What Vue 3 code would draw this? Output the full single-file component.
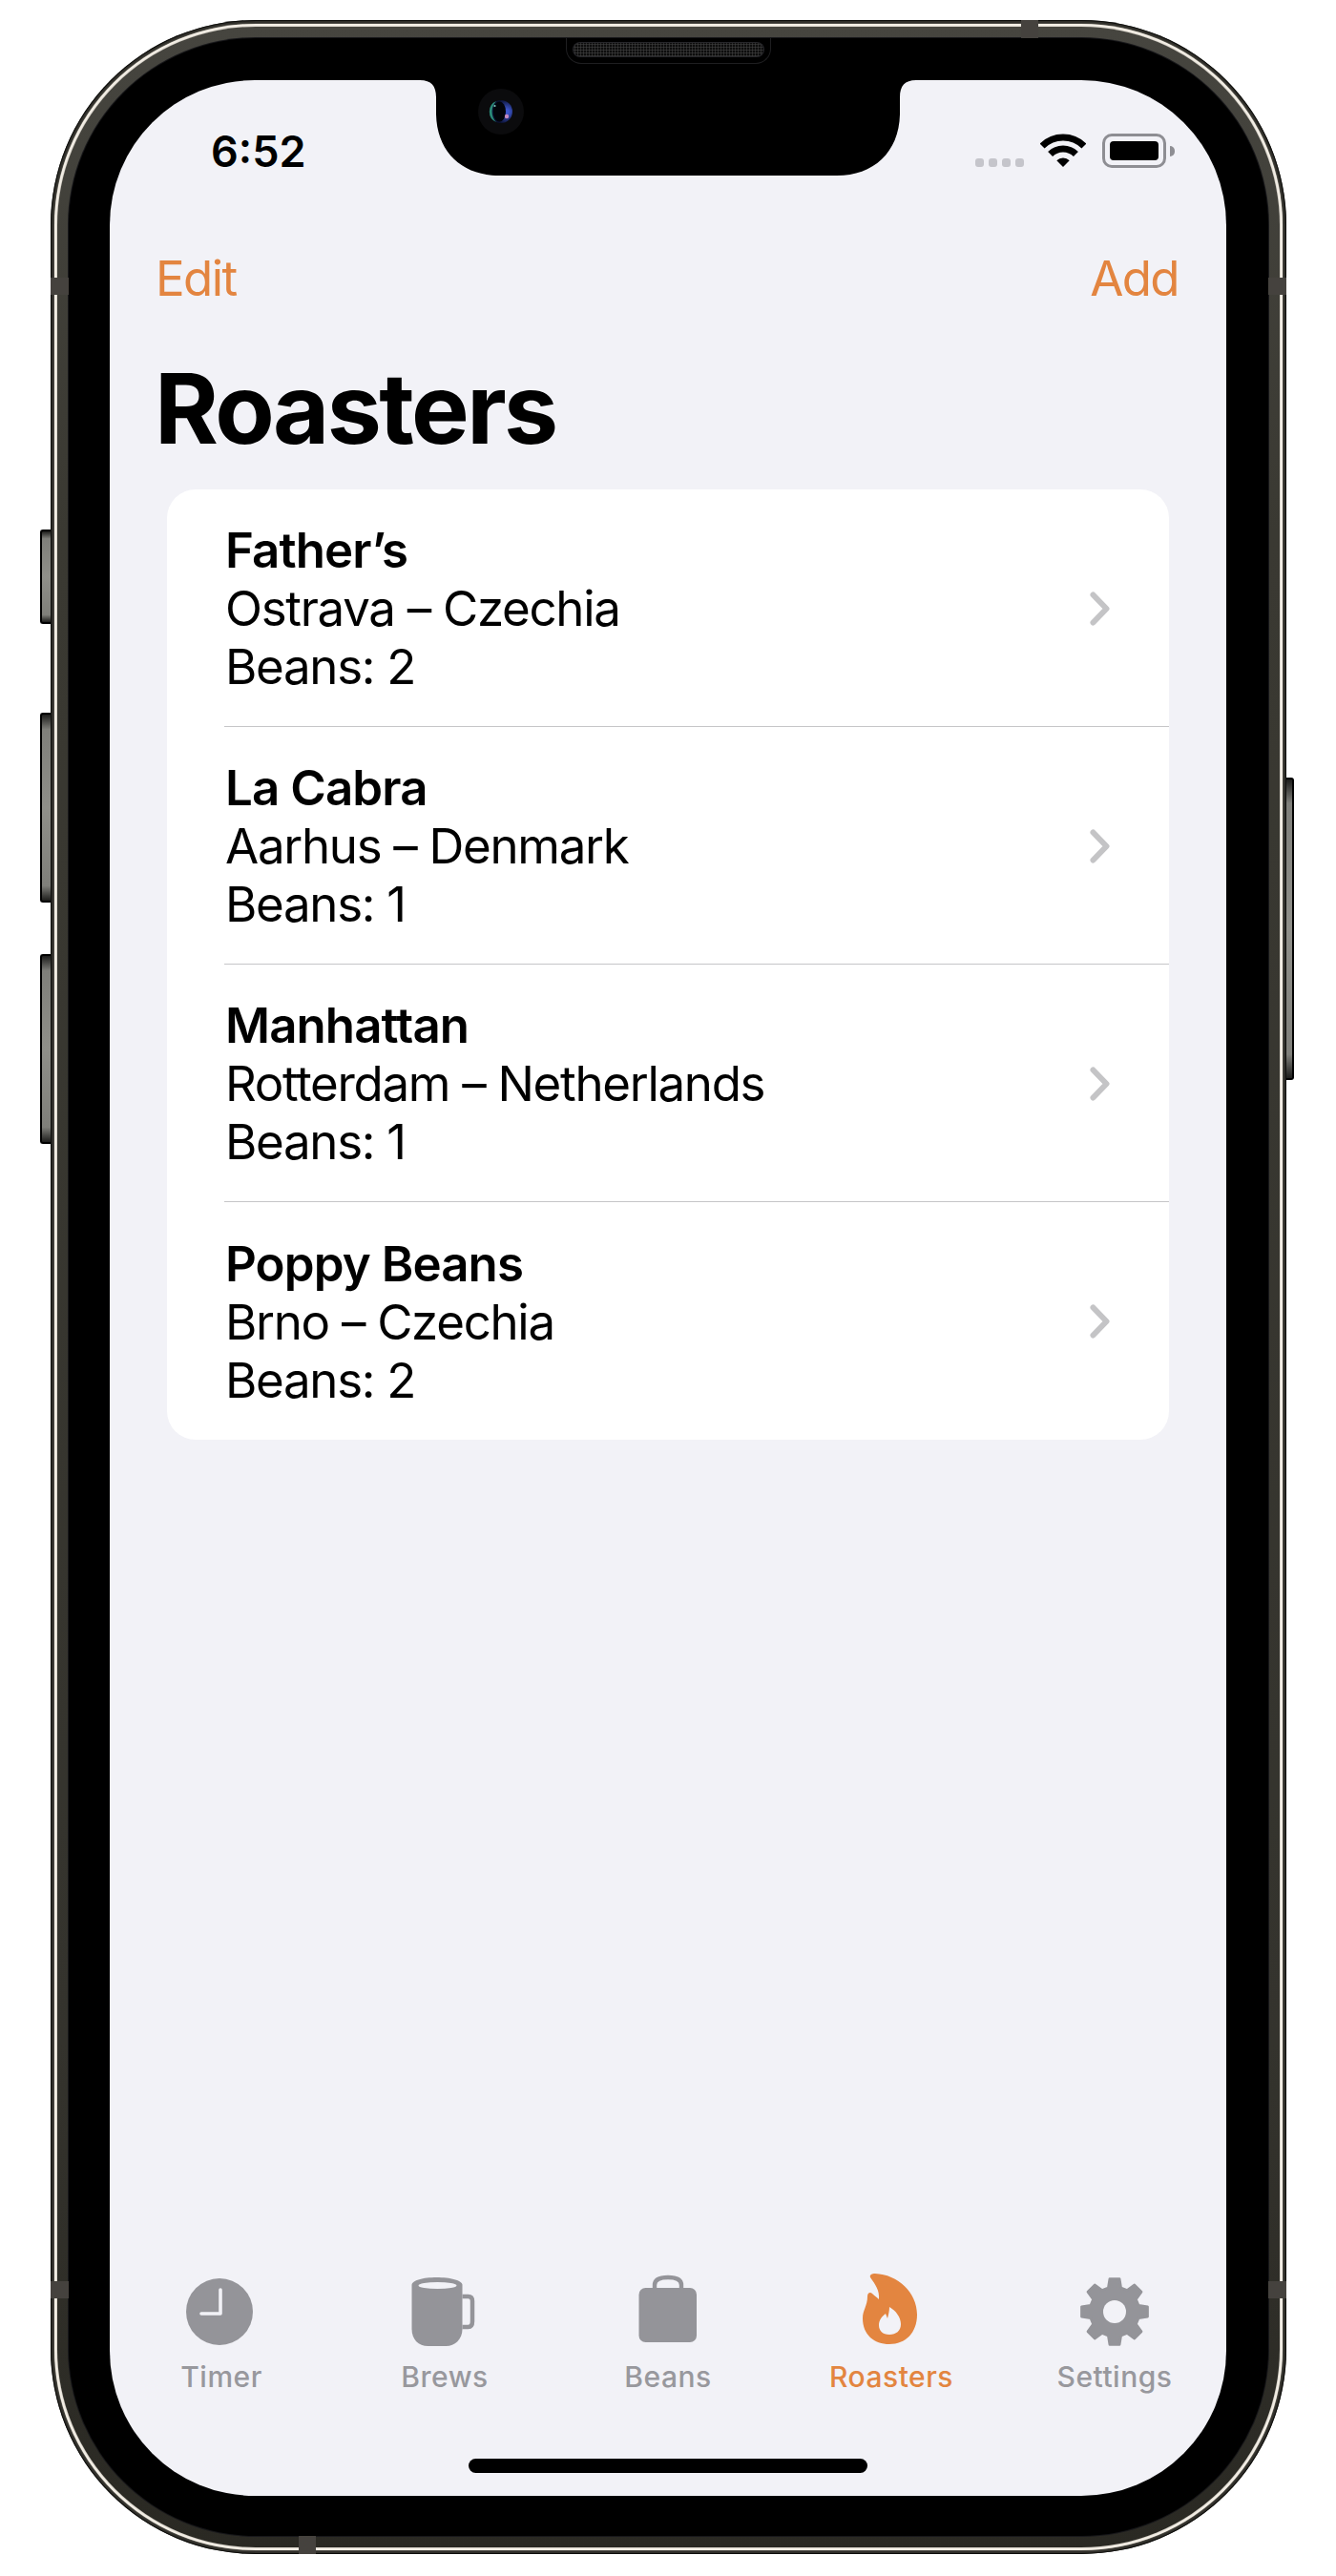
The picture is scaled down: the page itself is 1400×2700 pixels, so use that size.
<script setup>
const roasters = [
  { name: 'Father’s', place: 'Ostrava – Czechia', beans: 2 },
  { name: 'La Cabra', place: 'Aarhus – Denmark', beans: 1 },
  { name: 'Manhattan', place: 'Rotterdam – Netherlands', beans: 1 },
  { name: 'Poppy Beans', place: 'Brno – Czechia', beans: 2 },
]
const gearPoints = Array.from({ length: 8 }, (_, i) => {
  const a = i * 45 - 90
  return [[a - 15, 26], [a - 8.5, 35], [a + 8.5, 35], [a + 15, 26]]
    .map(([d, r]) => {
      const t = (d * Math.PI) / 180
      return `${(37 + r * Math.cos(t)).toFixed(2)},${(37 + r * Math.sin(t)).toFixed(2)}`
    })
    .join(' ')
}).join(' ')
</script>

<template>
  <div class="phone">
    <div class="edge">
      <div class="bright">
        <div class="metal">
          <div class="hairline">
            <div class="bezel">
              <main class="screen">
                <header class="status">
                  <span class="time">6:52</span>
                  <div class="indicators">
                    <div class="dots"><i></i><i></i><i></i><i></i></div>
                    <svg class="wifi" width="48" height="36" viewBox="0 0 48 36">
                      <path d="M2.1 14.1A31 31 0 0 1 45.9 14.1" fill="none" stroke="#000" stroke-width="7" />
                      <path d="M10.6 22.6A19 19 0 0 1 37.4 22.6" fill="none" stroke="#000" stroke-width="7" />
                      <path d="M24 36L17.3 29.3A9.5 9.5 0 0 1 30.7 29.3Z" fill="#000" />
                    </svg>
                    <div class="battery"><div class="charge"></div><div class="cap"></div></div>
                  </div>
                </header>
                <nav class="nav"><span>Edit</span><span>Add</span></nav>
                <h1 class="title">Roasters</h1>
                <section class="card">
                  <div v-for="r in roasters" :key="r.name" class="row">
                    <div class="info">
                      <div class="name">{{ r.name }}</div>
                      <div>{{ r.place }}</div>
                      <div>Beans: {{ r.beans }}</div>
                    </div>
                    <svg class="chevron" width="21" height="36" viewBox="0 0 21 36">
                      <path d="M3.5 3.5L17.5 18L3.5 32.5" fill="none" stroke="#c4c4c6" stroke-width="6" stroke-linecap="round" stroke-linejoin="round" />
                    </svg>
                  </div>
                </section>
                <footer class="tabs">
                  <div class="tab">
                    <svg width="80" height="80" viewBox="0 0 80 80">
                      <circle cx="38" cy="40" r="35" fill="#949499" />
                      <path d="M39 17V42H19" fill="none" stroke="#f2f2f7" stroke-width="3.6" stroke-linecap="round" stroke-linejoin="round" />
                    </svg>
                    <span>Timer</span>
                  </div>
                  <div class="tab">
                    <svg width="80" height="80" viewBox="1.5 0 80 80">
                      <path d="M7 12C7 7 19 4 33 4C47 4 60 7 60 12V58C60 69 52 76 43 76H24C14 76 7 69 7 58Z" fill="#949499" />
                      <ellipse cx="34" cy="12.5" rx="20" ry="3.6" fill="#f2f2f7" />
                      <path d="M60 24H66C69 24 70.5 26 70.5 29V50C70.5 54 69 56 66 56H60" fill="none" stroke="#949499" stroke-width="4.5" />
                    </svg>
                    <span>Brews</span>
                  </div>
                  <div class="tab">
                    <svg width="80" height="80" viewBox="0 0 80 80">
                      <path d="M26 16V12C26 6 32 4 40 4C48 4 54 6 54 12V16" fill="none" stroke="#949499" stroke-width="4.4" />
                      <rect x="9.5" y="15" width="60.5" height="57" rx="7" fill="#949499" />
                    </svg>
                    <span>Beans</span>
                  </div>
                  <div class="tab active">
                    <svg width="80" height="80" viewBox="-10 0 80 80">
                      <path d="M8 4C7 1 10 0 13 0C37 1 57 20 57 43C57 62 45 74 28 74C12 74 0 64 0 47C0 38 5 34 5 24C5 20 8 19 10 21C12 23 15 25 17 27C18 18 13 11 8 4Z" fill="#e38540" />
                      <path d="M28 35C35 39 40 46 40 53C40 60 35 64 28 64C21 64 17 60 17 54C17 49 20 45 24 42L26 47C27 43 28 39 28 35Z" fill="#f2f2f7" />
                    </svg>
                    <span>Roasters</span>
                  </div>
                  <div class="tab">
                    <svg width="80" height="80" viewBox="-3 -3 80 80">
                      <polygon :points="gearPoints" fill="#949499" stroke="#949499" stroke-width="2.5" stroke-linejoin="round" />
                      <circle cx="37" cy="37" r="12" fill="#f2f2f7" />
                    </svg>
                    <span>Settings</span>
                  </div>
                </footer>
                <div class="home"></div>
                <svg class="notch" width="520" height="100" viewBox="0 0 520 100">
                  <path d="M0 0C12 0 17 6 17 18V36C18 76 45 100 83 100H437C475 100 502 76 503 36V18C503 6 508 0 520 0Z" fill="#000" />
                </svg>
              </main>
            </div>
          </div>
        </div>
      </div>
    </div>

    <div class="speaker"><div class="grille"></div></div>
    <svg class="camera" width="50" height="50" viewBox="0 0 50 50">
      <defs>
        <radialGradient id="lensBlue" cx="0.75" cy="0.5" r="0.55">
          <stop offset="0.15" stop-color="#3d56cc" />
          <stop offset="1" stop-color="#0a1030" />
        </radialGradient>
      </defs>
      <circle cx="25" cy="25" r="24" fill="#0b0b0d" />
      <circle cx="25" cy="25" r="12" fill="url(#lensBlue)" />
      <path d="M20 14A12 12 0 0 0 20 36A16 16 0 0 1 20 14Z" fill="#2a8a78" />
      <ellipse cx="23.5" cy="25" rx="6.5" ry="10.5" fill="#02040a" />
      <circle cx="31" cy="30" r="2.2" fill="#c68ac0" />
      <circle cx="18.5" cy="19" r="1.1" fill="#7fc6c0" />
    </svg>

    <i class="side left" style="top: 534px; height: 99px"></i>
    <i class="side left" style="top: 726px; height: 199px"></i>
    <i class="side left" style="top: 979px; height: 199px"></i>
    <i class="side right" style="top: 794px; height: 317px"></i>

    <i class="band vert" style="left: 0; top: 270px"></i>
    <i class="band vert" style="right: 0; top: 270px"></i>
    <i class="band vert" style="left: 0; top: 2370px"></i>
    <i class="band vert" style="right: 0; top: 2370px"></i>
    <i class="band horiz" style="left: 1017px; top: 0"></i>
    <i class="band horiz" style="left: 260px; bottom: 0"></i>
  </div>
</template>

<style>
html, body { margin: 0; background: #fff; }
</style>

<style scoped>
.phone {
  position: relative;
  box-sizing: border-box;
  width: 1295px;
  height: 2656px;
  margin: 21px 0 0 53px;
  font-family: Inter, "Noto Sans", sans-serif;
  color: #000;
}
.edge {
  height: 100%;
  box-sizing: border-box;
  padding: 4px;
  border-radius: 215px;
  background: #2f2e29;
  box-shadow: inset 0 0 0 1px #0e0e0c;
}
.bright {
  height: 100%;
  box-sizing: border-box;
  padding: 3px;
  border-radius: 211px;
  background: #f4efe6;
  box-shadow: 0 0 1.5px #b9b5aa;
}
.metal {
  height: 100%;
  box-sizing: border-box;
  padding: 11px;
  border-radius: 208px;
  background: linear-gradient(180deg, #46453f, #3a3932 20%, #34332d 80%, #2a2923);
  box-shadow: 0 0 1.5px #8d8a80;
}
.hairline { height: 100%; box-sizing: border-box; padding: 1px; border-radius: 197px; background: #17171a; }
.bezel { height: 100%; box-sizing: border-box; padding: 44px 44px 42px 43px; border-radius: 196px; background: #000; }

.screen {
  position: relative;
  display: flex;
  flex-direction: column;
  width: 1170px;
  height: 2532px;
  overflow: hidden;
  border-radius: 152px;
  background: #f2f2f7;
}

.status {
  display: flex;
  align-items: flex-start;
  justify-content: space-between;
  height: 129px;
  padding: 48px 63px 0 106px;
  box-sizing: border-box;
}
.time { font-size: 45px; line-height: 54px; font-weight: 600; }
.indicators { display: flex; align-items: flex-end; margin-top: 7px; height: 37px; }
.dots { display: flex; gap: 5px; margin-right: 17px; padding-bottom: 1px; }
.dots i { display: block; width: 9px; height: 9px; border-radius: 3px; background: #c5c5cb; }
.wifi { margin-right: 17px; margin-bottom: 1px; }
.battery {
  position: relative;
  box-sizing: border-box;
  width: 67px;
  height: 36px;
  padding: 5px;
  border: 3px solid #8e8e93;
  border-radius: 10px;
}
.charge { height: 100%; border-radius: 4px; background: #000; }
.cap {
  position: absolute;
  top: 10px;
  right: -12px;
  width: 5px;
  height: 11px;
  border-radius: 0 5px 5px 0;
  background: #8e8e93;
}

.nav {
  display: flex;
  justify-content: space-between;
  height: 62px;
  margin-top: 48px;
  padding: 0 50px 0 48px;
  font-size: 51px;
  line-height: 62px;
  letter-spacing: -1.6px;
  color: #e38540;
}
.title {
  margin: 44px 0 0;
  padding-left: 47px;
  font-size: 102px;
  line-height: 122px;
  font-weight: 700;
  letter-spacing: -2.6px;
}

.card {
  margin: 24px 60px 0;
  border-radius: 30px;
  background: #fff;
  font-size: 51px;
  line-height: 61px;
  letter-spacing: -1.3px;
}
.row {
  display: flex;
  align-items: center;
  justify-content: space-between;
  height: 249px;
  box-sizing: border-box;
  margin-left: 60px;
  padding: 1px 62px 0 1px;
  border-bottom: 1px solid #c6c6c8;
}
.row:last-child { border-bottom: 0; }
.name { font-weight: 600; letter-spacing: -0.9px; }

.tabs {
  display: grid;
  grid-template-columns: repeat(5, 1fr);
  margin-top: auto;
}
.tab {
  display: flex;
  flex-direction: column;
  align-items: center;
  font-size: 30px;
  line-height: 36px;
  font-weight: 500;
  letter-spacing: 0.5px;
  color: #98989d;
}
.tab svg { display: block; margin-bottom: 10px; }
.tab.active { color: #e38540; }

.home {
  width: 418px;
  height: 15px;
  margin: 68px auto 24px;
  border-radius: 8px;
  background: #000;
}

.notch { position: absolute; top: 0; left: 325px; }

.speaker {
  position: absolute;
  top: 19px;
  left: 540px;
  box-sizing: border-box;
  width: 215px;
  height: 27px;
  padding: 5px 7px;
  border: 1px solid #1e1e20;
  border-top: 0;
  border-radius: 0 0 16px 16px;
}
.grille {
  height: 14px;
  border-radius: 7px;
  background-color: #0d0d0d;
  background-image: radial-gradient(circle, #3a3a3a 0.9px, transparent 1.2px);
  background-size: 3px 3px;
  box-shadow: 0 0 0 1px #26262a;
}
.camera { position: absolute; top: 71px; left: 447px; }

.side {
  position: absolute;
  display: block;
  box-sizing: border-box;
  width: 11px;
  border: 2px solid #000;
  background: linear-gradient(180deg, #1d1d1b, #7f7f7a 8%, #8f8f89 50%, #7f7f7a 92%, #1d1d1b);
}
.side.left { left: -11px; border-right: 0; border-radius: 3px 0 0 3px; }
.side.right { right: -8px; width: 8px; border-left: 0; border-radius: 0 3px 3px 0; }

.band { position: absolute; display: block; background: #45423e; }
.band.vert { width: 19px; height: 18px; }
.band.horiz { width: 18px; height: 19px; }
</style>
